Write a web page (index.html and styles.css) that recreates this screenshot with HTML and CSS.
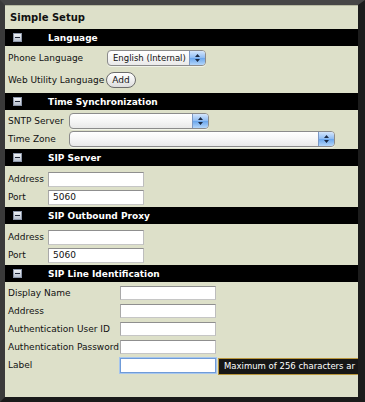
FILE: index.html
```html
<!DOCTYPE html>
<html>
<head>
<meta charset="utf-8">
<title>Simple Setup</title>
<link rel="stylesheet" href="styles.css">
</head>
<body>
<div class="frame">
  <div class="panel">
    <div class="title">Simple Setup</div>

    <div class="sec-head"><span class="toggle"></span><span class="sec-title">Language</span></div>
    <div class="sec-body lang">
      <div class="label">Phone Language</div>
      <div class="field">
        <div class="select sel-phone"><span class="sel-text">English (Internal)</span><span class="sel-cap"><svg width="7" height="10" viewBox="0 0 7 10"><path d="M3.5 1 L6 4 H1 Z M3.5 9 L6 6 H1 Z" fill="#1a2a44"/></svg></span></div>
      </div>
      <div class="label">Web Utility Language</div>
      <div class="field"><button class="btn">Add</button></div>
    </div>

    <div class="sec-head"><span class="toggle"></span><span class="sec-title">Time Synchronization</span></div>
    <div class="sec-body time">
      <div class="label">SNTP Server</div>
      <div class="field">
        <div class="select sel-sntp"><span class="sel-text"></span><span class="sel-cap"><svg width="7" height="10" viewBox="0 0 7 10"><path d="M3.5 1 L6 4 H1 Z M3.5 9 L6 6 H1 Z" fill="#1a2a44"/></svg></span></div>
      </div>
      <div class="label">Time Zone</div>
      <div class="field">
        <div class="select sel-tz"><span class="sel-text"></span><span class="sel-cap"><svg width="7" height="10" viewBox="0 0 7 10"><path d="M3.5 1 L6 4 H1 Z M3.5 9 L6 6 H1 Z" fill="#1a2a44"/></svg></span></div>
      </div>
    </div>

    <div class="sec-head"><span class="toggle"></span><span class="sec-title">SIP Server</span></div>
    <div class="sec-body sip">
      <div class="label">Address</div>
      <div class="field"><input class="inp" type="text" value=""></div>
      <div class="label">Port</div>
      <div class="field"><input class="inp" type="text" value="5060"></div>
    </div>

    <div class="sec-head"><span class="toggle"></span><span class="sec-title">SIP Outbound Proxy</span></div>
    <div class="sec-body sip">
      <div class="label">Address</div>
      <div class="field"><input class="inp" type="text" value=""></div>
      <div class="label">Port</div>
      <div class="field"><input class="inp" type="text" value="5060"></div>
    </div>

    <div class="sec-head"><span class="toggle"></span><span class="sec-title">SIP Line Identification</span></div>
    <div class="sec-body line">
      <div class="label">Display Name</div>
      <div class="field"><input class="inp" type="text" value=""></div>
      <div class="label">Address</div>
      <div class="field"><input class="inp" type="text" value=""></div>
      <div class="label">Authentication User ID</div>
      <div class="field"><input class="inp" type="text" value=""></div>
      <div class="label">Authentication Password</div>
      <div class="field"><input class="inp" type="password" value=""></div>
      <div class="label">Label</div>
      <div class="field">
        <input class="inp focused" type="text" value="">
        <div class="tip">Maximum of 256 characters ar</div>
      </div>
    </div>
  </div>
</div>
</body>
</html>
```

FILE: styles.css
```css
html, body {
  margin: 0;
  padding: 0;
  background: #1c1c1c;
}

.frame {
  width: 365px;
  height: 402px;
  box-sizing: border-box;
  border-top: 5px solid #464646;
  border-left: 5px solid #3a3a3a;
  border-right: 7px solid #1c1c1c;
  border-bottom: 5px solid #1a1a1a;
}

.panel {
  height: 392px;
  background: #dde0c9;
  border-top: 1px solid #b7baa2;
  box-sizing: border-box;
  overflow: hidden;
  font-family: "DejaVu Sans", Verdana, sans-serif;
  font-size: 9px;
  color: #111;
}

.title {
  height: 23px;
  line-height: 24px;
  padding-left: 5px;
  font-size: 10px;
  font-weight: bold;
  color: #111;
}

.sec-head {
  height: 17px;
  background: #000;
  display: flex;
  align-items: center;
}

.toggle {
  position: relative;
  width: 9px;
  height: 9px;
  margin-left: 8px;
  box-sizing: border-box;
  background: linear-gradient(#eef1f5, #b9c1cf);
  border: 1px solid #8d97aa;
}

.toggle::after {
  content: "";
  position: absolute;
  left: 1px;
  right: 1px;
  top: 3px;
  height: 1px;
  background: #1f2636;
}

.sec-title {
  margin-left: 26px;
  color: #fff;
  font-weight: bold;
  font-size: 9px;
}

.sec-body {
  display: grid;
  column-gap: 5px;
  padding-left: 3px;
  align-items: center;
  grid-auto-rows: 18px;
}

.lang {
  grid-template-columns: 94px auto;
  grid-template-rows: 20px 24px;
  padding-top: 2px;
  padding-bottom: 1px;
}

.time {
  grid-template-columns: 56px auto;
  padding-top: 2px;
  padding-bottom: 1px;
}

.sip {
  grid-template-columns: 35px auto;
  padding-top: 4px;
  padding-bottom: 1px;
}

.line {
  grid-template-columns: 107px auto;
  padding-top: 2px;
}

.label {
  white-space: nowrap;
}

.field {
  position: relative;
  display: flex;
  align-items: center;
}

.select {
  display: flex;
  height: 16px;
  box-sizing: border-box;
  border: 1px solid #8b8b8b;
  border-radius: 4px;
  background: linear-gradient(#ffffff, #f6f6f6 50%, #e9e9e9);
  overflow: hidden;
  box-shadow: 0 1px 0 rgba(255,255,255,0.6);
}

.sel-phone { width: 99px; }
.sel-sntp { width: 140px; }
.sel-tz { width: 266px; }

.sel-text {
  flex: 1;
  padding-left: 5px;
  line-height: 14px;
  font-size: 8.5px;
  white-space: nowrap;
  overflow: hidden;
}

.sel-cap {
  width: 15px;
  display: flex;
  align-items: center;
  justify-content: center;
  border-left: 1px solid #7b98c4;
  background: linear-gradient(#d4e6fc, #8dbbf2 50%, #6aa6ec 52%, #b4d6fa);
}

.btn {
  width: 30px;
  height: 16px;
  padding: 0;
  border: 1px solid #6b6b6b;
  border-radius: 8px;
  background: linear-gradient(#ffffff, #f0f0f0 50%, #dcdcdc);
  font-family: "DejaVu Sans", Verdana, sans-serif;
  font-size: 9px;
  color: #111;
  margin-left: -1px;
}

.inp {
  width: 96px;
  height: 15px;
  box-sizing: border-box;
  margin: 0;
  padding: 0 4px;
  border: 1px solid;
  border-color: #8f8f8f #bdbdbd #c6c6c6 #a9a9a9;
  background: #fff;
  font-family: "DejaVu Sans", Verdana, sans-serif;
  font-size: 9px;
  color: #111;
  outline: none;
}

.line .inp {
  height: 14px;
}

.inp.focused {
  height: 15px;
  border-color: #6f9bd8;
  box-shadow: 0 0 0 1px #a6c6ee;
}

.tip {
  position: absolute;
  left: 98px;
  top: 0;
  height: 17px;
  box-sizing: border-box;
  line-height: 15px;
  padding: 0 12px 0 5px;
  background: #161616;
  border: 1px solid #b8963c;
  color: #fff;
  white-space: nowrap;
  font-size: 8.5px;
}
```
